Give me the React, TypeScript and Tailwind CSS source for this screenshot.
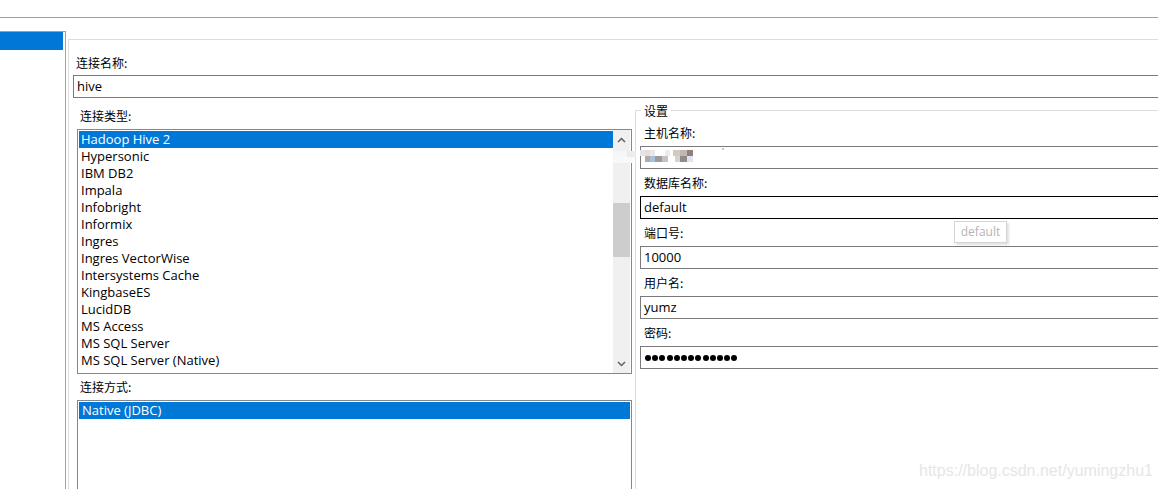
import React from "react";

const dbTypes = [
  "Hadoop Hive 2",
  "Hypersonic",
  "IBM DB2",
  "Impala",
  "Infobright",
  "Informix",
  "Ingres",
  "Ingres VectorWise",
  "Intersystems Cache",
  "KingbaseES",
  "LucidDB",
  "MS Access",
  "MS SQL Server",
  "MS SQL Server (Native)",
];

// blurred host name (mosaic cells: x, y, w, h, colour)
const mosaic: [number, number, number, number, string][] = [
  [613, 151, 14, 6, "#f6f6f6"],
  [627, 151, 9, 6, "#ececec"],
  [640, 150, 5, 6, "#e4e4e4"],
  [645, 150, 5, 6, "#ecdcd4"],
  [650, 150, 5, 6, "#e8e8e8"],
  [665, 150, 5, 6, "#ededed"],
  [673, 150, 7, 6, "#d2cac4"],
  [680, 150, 7, 6, "#c2b8b2"],
  [687, 150, 6, 6, "#8c8282"],
  [613, 157, 20, 6, "#f8f8f8"],
  [645, 156, 5, 6, "#b2aaa4"],
  [650, 156, 5, 6, "#a8c2da"],
  [655, 156, 7, 6, "#a29a98"],
  [662, 156, 6, 6, "#c4c2c2"],
  [675, 156, 5, 6, "#dad2d2"],
  [680, 156, 7, 6, "#928a8a"],
  [687, 156, 6, 6, "#e2e2f0"],
];

const ui = "font-['Open_Sans','Noto_Sans_CJK_SC',sans-serif] text-[13px] text-black";
const cjk = "font-['Noto_Sans_CJK_SC','Noto_Sans',sans-serif] text-[12px] leading-[17px] text-black h-[17px]";

function Chevron({ up }: { up?: boolean }) {
  return (
    <svg width="9" height="6" viewBox="0 0 9 6" className="block">
      <polyline
        points={up ? "1,5 4.5,1.5 8,5" : "1,1 4.5,4.5 8,1"}
        fill="none"
        stroke="#606060"
        strokeWidth="1.5"
      />
    </svg>
  );
}

function Field({
  label,
  value,
  focused,
  first,
  children,
}: {
  label: string;
  value?: string;
  focused?: boolean;
  first?: boolean;
  children?: React.ReactNode;
}) {
  return (
    <div className={first ? "mt-[13px]" : "mt-[5px]"}>
      <div className={`${cjk} pl-[8px]`}>{label}</div>
      <div
        className={`mt-[5px] ml-[4px] h-[23px] border flex items-center px-[3px] ${ui} leading-[21px] ${
          focused ? "border-[#000000]" : "border-[#7a7a7a]"
        }`}
      >
        {children ?? value}
      </div>
    </div>
  );
}

export default function App() {
  return (
    <div className="relative w-[1158px] h-[489px] overflow-hidden bg-white">
      <div className="h-[18px] border-b border-[#a0a0a0]" />

      <div className="flex h-[471px]">
        {/* left tree panel */}
        <div className="mt-[13px] w-[66px] shrink-0 border-t border-r border-[#a0a0a0]">
          <div className="h-[18px] w-[63px] bg-[#0078d7]" />
        </div>

        {/* main content */}
        <div className="mt-[21px] ml-[2px] flex-1 border-t border-l border-[#dcdcdc]">
          <div className={`${cjk} mt-[14px] pl-[7px]`}>连接名称:</div>
          <div className={`mt-[4px] ml-[4px] w-[1200px] h-[23px] border border-[#7a7a7a] px-[3px] ${ui} leading-[21px]`}>
            hive
          </div>

          <div className="flex">
            {/* left column */}
            <div className="ml-[8px] w-[555px] shrink-0">
              <div className={`${cjk} mt-[9px] pl-[3px]`}>连接类型:</div>
              <div className="mt-[5px] h-[245px] border border-[#828790] flex">
                <div className="flex-1 pl-[1px] pt-[1px]">
                  {dbTypes.map((t, i) => (
                    <div
                      key={t}
                      className={`h-[17px] leading-[17px] pl-[2px] ${ui} whitespace-nowrap ${
                        i === 0 ? "bg-[#0078d7] text-white" : ""
                      }`}
                    >
                      {t}
                    </div>
                  ))}
                </div>
                <div className="w-[17px] mr-[1px] bg-[#f0f0f0] flex flex-col">
                  <div className="h-[17px] flex items-center justify-center pt-[3px]">
                    <Chevron up />
                  </div>
                  <div className="mt-[56px] h-[54px] bg-[#cdcdcd]" />
                  <div className="flex-1" />
                  <div className="h-[17px] flex items-center justify-center pb-[1px]">
                    <Chevron />
                  </div>
                </div>
              </div>

              <div className={`${cjk} mt-[4px] pl-[3px]`}>连接方式:</div>
              <div className="mt-[5px] h-[120px] border border-[#828790] p-[1px]">
                <div className={`h-[17px] leading-[17px] pl-[3px] bg-[#0078d7] text-white ${ui}`}>Native (JDBC)</div>
              </div>
            </div>

            {/* settings group */}
            <div className="relative ml-[3px] mt-[12px] w-[600px] shrink-0 border-t border-l border-[#dcdcdc]">
              <div className={`absolute -top-[9px] left-[5px] bg-white px-[3px] ${cjk}`}>设置</div>
              <Field label="主机名称:" first>&nbsp;</Field>
              <Field label="数据库名称:" value="default" focused />
              <Field label="端口号:" value="10000" />
              <Field label="用户名:" value="yumz" />
              <Field label="密码:">
                <div className="flex gap-[1.2px] pl-[1px]">
                  {Array.from({ length: 13 }).map((_, i) => (
                    <div key={i} className="w-[6px] h-[6px] rounded-full bg-black" />
                  ))}
                </div>
              </Field>
            </div>
          </div>
        </div>
      </div>

      {/* blurred host name */}
      {mosaic.map(([x, y, w, h, c], i) => (
        <div key={i} className="absolute" style={{ left: x, top: y, width: w, height: h, background: c }} />
      ))}
      <div className="absolute left-[722px] top-[148px] w-[2px] h-[2px] bg-[#c8c8c8]" />

      {/* tooltip */}
      <div className="absolute left-[954px] top-[221px] w-[53px] h-[22px] bg-white border border-[#d4d4d4] shadow-[2px_2px_2px_rgba(0,0,0,0.12)] flex items-center justify-center font-['Open_Sans',sans-serif] text-[12px] text-[#b4b4b4]">
        default
      </div>

      {/* watermark */}
      <div className="absolute left-[919px] top-[461px] font-['Liberation_Sans',sans-serif] text-[16px] leading-[20px] text-[#e6e6e6] whitespace-nowrap">
        https://blog.csdn.net/yumingzhu1
      </div>
    </div>
  );
}
